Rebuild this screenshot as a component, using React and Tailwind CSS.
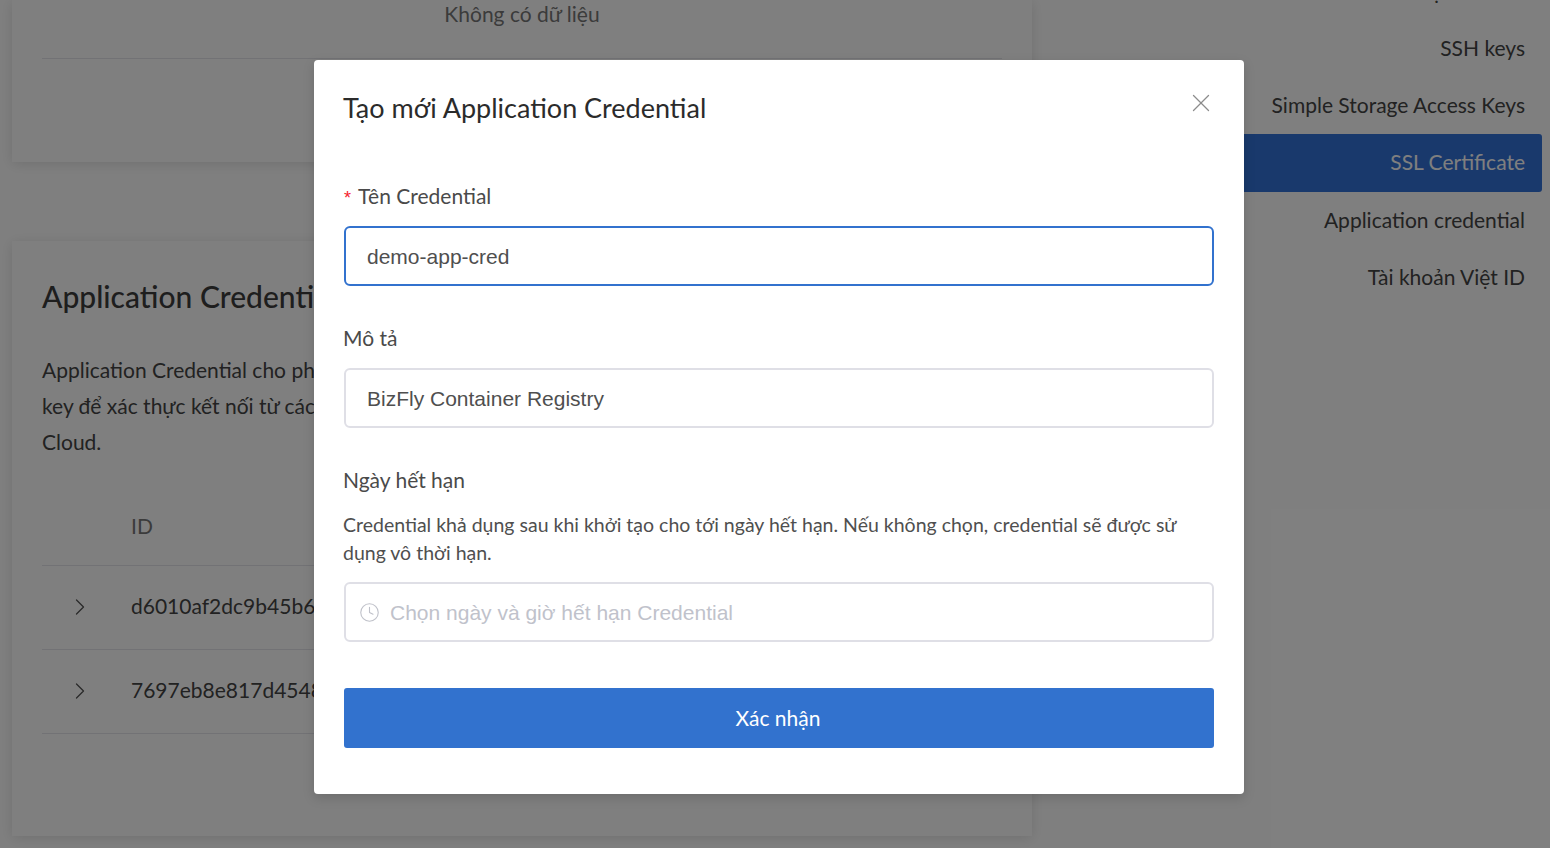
import React from 'react';
import { ChevronRight, X, Clock } from 'lucide-react';

const MENU = ["Xác thực 2 bước", "SSH keys", "Simple Storage Access Keys", "SSL Certificate", "Application credential", "Tài khoản Việt ID"];

const ROWS = ["d6010af2dc9b45b6a1c3", "7697eb8e817d4548b2f0"];

function Background() {
  return (
    <div className="h-[848px] overflow-hidden bg-white flex font-['Lato',sans-serif] text-[21px] text-[#444]">
      <div className="w-[1032px] pl-3 shrink-0">
        <div className="h-[162px] bg-white shadow-[0_2px_12px_rgba(0,0,0,0.12)] px-[30px]">
          <div className="h-[59px] border-b border-[#e4e4ea] text-center leading-[28px] text-[#777]">Không có dữ liệu</div>
        </div>
        <div className="mt-[79px] h-[595px] bg-white shadow-[0_2px_12px_rgba(0,0,0,0.12)] px-[30px] pt-[35px]">
          <h2 className="text-[30px] leading-[40px] font-medium text-[#3c3c3c]">Application Credentials</h2>
          <p className="mt-[36px] leading-[36px]">
            Application Credential cho phép người dùng tạo các ứng dụng truy cập tài nguyên bằng access
            <br />
            key để xác thực kết nối từ các ứng dụng bên ngoài tới các dịch vụ của Bizfly
            <br />
            Cloud.
          </p>
          <div className="mt-[29px] h-[77px] pb-[2px] border-b border-[#e4e4ea] pl-[89px] flex items-center text-[#777]">ID</div>
          {ROWS.map(id => (
            <div key={id} className="h-[84px] border-b border-[#e4e4ea] flex items-center">
              <ChevronRight className="ml-[24px] w-[28px] h-[28px] text-[#555] mb-[2px]" strokeWidth={1.1} />
              <span className="ml-[37px] pb-[3px]">{id}</span>
            </div>
          ))}
        </div>
      </div>
      <div className="flex-1 pr-2 pt-[20px] -mt-[57px]">
        {MENU.map(item => (
          <div
            key={item}
            className={
              item === "SSL Certificate"
                ? "h-[58px] pb-[2px] bg-[#3272d9] rounded-[3px] text-white flex items-center justify-end pr-[17px]"
                : "h-[57px] pb-[2px] flex items-center justify-end pr-[17px]"
            }
          >
            {item}
          </div>
        ))}
      </div>
    </div>
  );
}

function Field({ label, required, children }) {
  return (
    <div>
      <div className={required ? "leading-[28px] text-[#4a4a4a]" : "-ml-px leading-[28px] text-[#4a4a4a]"}>
        {required && <span className="text-[#f5222d] mr-[7px] font-['Liberation_Sans',sans-serif] text-[18px]">*</span>}
        {label}
      </div>
      {children}
    </div>
  );
}

export default function App() {
  return (
    <div className="relative h-[848px] overflow-hidden">
      <Background />
      {/* Modal */}
      <div className="absolute inset-0 bg-black/50 flex justify-center items-start pt-[60px] pl-[8px]">
        <div className="relative w-[930px] h-[734px] bg-white rounded-[4px] shadow-[0_4px_12px_rgba(0,0,0,0.15)] px-[30px] font-['Lato',sans-serif] text-[21px]">
          <button className="absolute top-[28px] right-[28px] text-[#8c8c8c]" aria-label="Close">
            <X className="w-[30px] h-[30px]" strokeWidth={1} />
          </button>
          <h3 className="-ml-px pt-[30px] text-[27px] leading-[36px] text-[#2b2b2b] font-normal">Tạo mới Application Credential</h3>
          <div className="mt-[56px]">
            <Field label="Tên Credential" required>
              <input
                readOnly
                value="demo-app-cred"
                className="mt-[14px] block w-full h-[60px] border-2 border-[#3272ce] rounded-[6px] px-[21px] pt-[2px] outline-none text-[21px] text-[#4f4f4f] font-['Liberation_Sans',sans-serif]"
              />
            </Field>
          </div>
          <div className="mt-[38px]">
            <Field label="Mô tả">
              <input
                readOnly
                value="BizFly Container Registry"
                className="mt-[16px] block w-full h-[60px] border-2 border-[#dfdfe6] rounded-[6px] px-[21px] pt-[2px] outline-none text-[21px] text-[#4f4f4f] font-['Liberation_Sans',sans-serif]"
              />
            </Field>
          </div>
          <div className="mt-[38px]">
            <Field label="Ngày hết hạn">
              <p className="-ml-px mt-[17px] text-[#4f4f4f] text-[19.5px] leading-[28px]">
                Credential khả dụng sau khi khởi tạo cho tới ngày hết hạn. Nếu không chọn, credential sẽ được sử dụng vô thời hạn.
              </p>
              <div className="mt-[15px] h-[60px] border-2 border-[#dfdfe6] rounded-[6px] flex items-center pl-[13px] gap-[10px]">
                <Clock className="w-[21px] h-[21px] text-[#bfc1c9]" strokeWidth={1.25} />
                <span className="pt-[2px] text-[#c0c2cb] text-[21px] font-['Liberation_Sans',sans-serif]">Chọn ngày và giờ hết hạn Credential</span>
              </div>
            </Field>
          </div>
          <button className="mt-[46px] block w-full h-[60px] bg-[#3272ce] rounded-[3px] text-white text-[21px] pr-[2px]">Xác nhận</button>
        </div>
      </div>
    </div>
  );
}
